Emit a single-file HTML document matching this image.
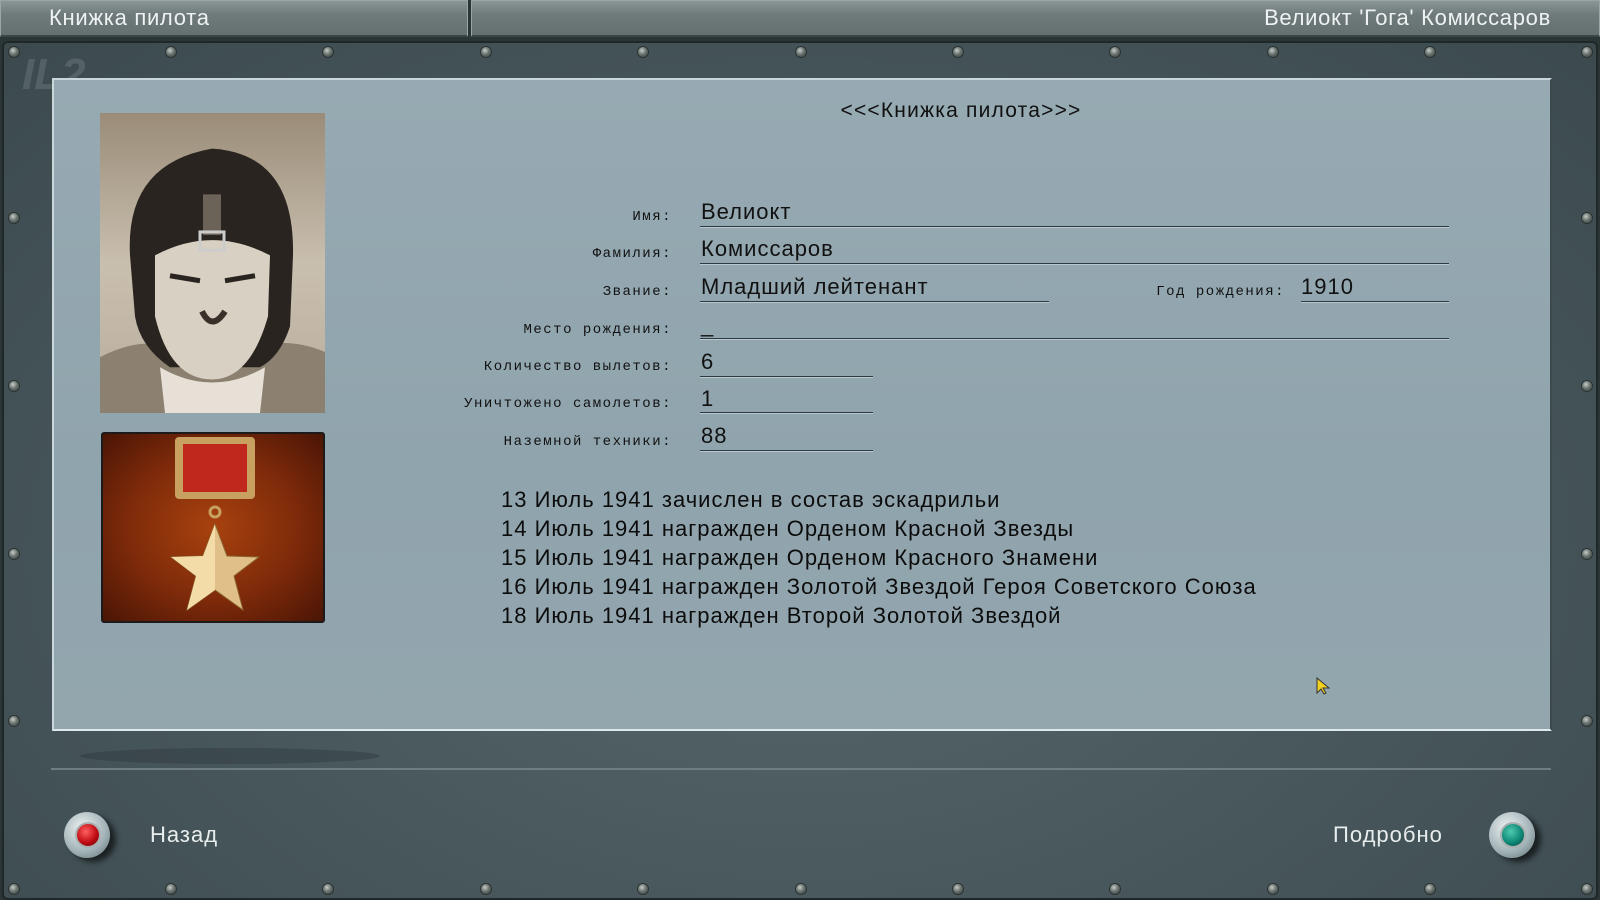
<!DOCTYPE html>
<html><head><meta charset="utf-8"><style>
*{margin:0;padding:0;box-sizing:border-box}
body{width:1600px;height:900px;overflow:hidden;background:#2b3536;font-family:"Liberation Sans",sans-serif;position:relative}
.abs{position:absolute}
.tab{top:0;height:37px;background:linear-gradient(#8a9596,#6f7a7b 40%,#657071);border:1px solid #9aa5a6;border-bottom:2px solid #3a4546;color:#eef2f2;font-size:22px;letter-spacing:0.7px;line-height:34px}
.frame{left:2px;top:41px;width:1596px;height:859px;background:radial-gradient(ellipse at 50% 60%,#56666a,#46555a 60%,#3c4a4e);border:2px solid #1f2829;border-radius:6px}
.content{left:52px;top:78px;width:1500px;height:653px;background:linear-gradient(#97aab3,#90a4ad 60%,#93a6ae);border-top:2px solid #c9d6da;border-left:2px solid #c9d6da;border-right:2px solid #3c4a4e;border-bottom:2px solid #dfe8ea}
.screw{width:10px;height:10px;border-radius:50%;background:radial-gradient(circle at 40% 35%,#c8ccc8,#6a7470 45%,#2f3634);box-shadow:0 0 0 1px #2a3231}
.lab{font-family:"Liberation Mono",monospace;font-size:14px;letter-spacing:1.5px;color:#111;text-align:right;width:500px;left:172px}
.val{font-size:22px;letter-spacing:1px;color:#111;left:701px}
.ln{height:1px;background:#2d3a3f;box-shadow:0 1px 0 #b8c8ce}
.log{left:501px;font-size:22px;letter-spacing:1px;color:#0c0c0c;line-height:29px}
.btxt{color:#e8eeee;font-size:22px;letter-spacing:1px}
</style></head><body>
<div class="abs tab" style="left:0;width:468px;padding-left:48px">Книжка пилота</div>
<div class="abs tab" style="left:471px;width:1129px;text-align:right;padding-right:48px">Велиокт 'Гога' Комиссаров</div>
<div class="abs frame"></div>
<div class="abs" style="left:22px;top:50px;font:italic bold 44px 'Liberation Sans';color:rgba(150,160,165,.25)">IL2</div>
<div class="abs content"></div>

<!-- photo -->
<div class="abs" style="left:100px;top:113px;width:225px;height:300px;background:linear-gradient(#9a8c78,#c9bfaf 50%,#b8ad9c);overflow:hidden">
<svg width="225" height="300" viewBox="0 0 225 295" preserveAspectRatio="none">
<path d="M0 240 Q40 220 70 230 L150 230 Q190 220 225 235 L225 295 L0 295Z" fill="#8c8170"/>
<path d="M30 140 Q25 50 112 35 Q195 40 193 140 L190 210 Q180 240 160 250 L70 250 Q40 230 35 200Z" fill="#2a2420"/>
<path d="M55 140 Q112 110 170 140 L168 200 Q150 262 112 262 Q70 262 55 200Z" fill="#d8d0c2"/>
<path d="M70 160 L100 165 M125 165 L155 160" stroke="#2a2420" stroke-width="5"/>
<path d="M102 195 Q112 215 125 195" stroke="#3a302a" stroke-width="6" fill="none"/>
<rect x="103" y="80" width="18" height="40" fill="#6b6258"/>
<rect x="100" y="117" width="24" height="18" fill="none" stroke="#ccc" stroke-width="3"/>
<path d="M60 250 Q112 280 165 250 L160 295 L65 295Z" fill="#e6e0d6"/>
</svg></div>

<!-- medal -->
<div class="abs" style="left:101px;top:432px;width:224px;height:191px;border:2px solid #1c1a1a;border-radius:3px;background:radial-gradient(ellipse at 50% 50%,#a8420e,#7e2a0a 55%,#4a1505);overflow:hidden">
<svg width="224" height="188" viewBox="0 0 224 188">
<rect x="72" y="3" width="80" height="62" rx="4" fill="#c8a060"/>
<rect x="80" y="10" width="64" height="48" fill="#c0281e"/>
<circle cx="112" cy="78" r="5" fill="none" stroke="#c8a060" stroke-width="3"/>
<polygon points="112,90 124,122 156,123 131,142 140,176 112,156 84,176 93,142 68,123 100,122" fill="#e0c088" stroke="#8a6530"/>
<polygon points="112,90 112,156 84,176 93,142 68,123 100,122" fill="#f3dca8"/>
</svg></div>

<div class="abs" style="left:711px;width:500px;top:99px;text-align:center;font-size:21px;letter-spacing:1.2px;color:#111">&lt;&lt;&lt;Книжка пилота&gt;&gt;&gt;</div>

<div class="abs lab" style="top:209px">Имя:</div>
<div class="abs lab" style="top:246px">Фамилия:</div>
<div class="abs lab" style="top:284px">Звание:</div>
<div class="abs lab" style="top:322px">Место рождения:</div>
<div class="abs lab" style="top:359px">Количество вылетов:</div>
<div class="abs lab" style="top:396px">Уничтожено самолетов:</div>
<div class="abs lab" style="top:434px">Наземной техники:</div>
<div class="abs lab" style="top:284px;left:785px">Год рождения:</div>

<div class="abs val" style="top:199px">Велиокт</div>
<div class="abs val" style="top:236px">Комиссаров</div>
<div class="abs val" style="top:274px">Младший лейтенант</div>
<div class="abs val" style="top:274px;left:1301px">1910</div>
<div class="abs val" style="top:312px">_</div>
<div class="abs val" style="top:349px">6</div>
<div class="abs val" style="top:386px">1</div>
<div class="abs val" style="top:423px">88</div>

<div class="abs ln" style="left:700px;width:749px;top:226px"></div>
<div class="abs ln" style="left:700px;width:749px;top:263px"></div>
<div class="abs ln" style="left:700px;width:349px;top:301px"></div>
<div class="abs ln" style="left:1301px;width:148px;top:301px"></div>
<div class="abs ln" style="left:700px;width:749px;top:338px"></div>
<div class="abs ln" style="left:700px;width:173px;top:376px"></div>
<div class="abs ln" style="left:700px;width:173px;top:412px"></div>
<div class="abs ln" style="left:700px;width:173px;top:450px"></div>

<div class="abs log" style="top:485px">13 Июль 1941 зачислен в состав эскадрильи<br>14 Июль 1941 награжден Орденом Красной Звезды<br>15 Июль 1941 награжден Орденом Красного Знамени<br>16 Июль 1941 награжден Золотой Звездой Героя Советского Союза<br>18 Июль 1941 награжден Второй Золотой Звездой</div>

<svg class="abs" style="left:1316px;top:677px" width="14" height="18"><path d="M1 1 L1 16 L5 12 L8 17 L10 16 L7 11 L13 11Z" fill="#f0d020" stroke="#333" stroke-width="1"/></svg>

<div class="abs" style="left:51px;top:768px;width:1500px;height:2px;background:#6f7d80"></div>
<div class="abs" style="left:80px;top:748px;width:300px;height:16px;border-radius:50%;background:rgba(40,50,52,.35)"></div>

<!-- buttons -->
<div class="abs" style="left:64px;top:812px;width:46px;height:46px;border-radius:50%;background:radial-gradient(circle at 40% 35%,#eef3f4,#9fb0b4 60%,#5a6a6e);box-shadow:6px 4px 6px rgba(0,0,0,.6)"></div>
<div class="abs" style="left:75px;top:822px;width:26px;height:26px;border-radius:50%;background:radial-gradient(circle at 40% 35%,#ff6060,#c00c14 55%,#6a0008);border:2px solid #a9b0b0"></div>
<div class="abs btxt" style="left:150px;top:822px">Назад</div>
<div class="abs btxt" style="left:1333px;top:822px">Подробно</div>
<div class="abs" style="left:1489px;top:812px;width:46px;height:46px;border-radius:50%;background:radial-gradient(circle at 40% 35%,#eef3f4,#9fb0b4 60%,#5a6a6e);box-shadow:6px 4px 6px rgba(0,0,0,.6)"></div>
<div class="abs" style="left:1500px;top:822px;width:26px;height:26px;border-radius:50%;background:radial-gradient(circle at 40% 35%,#50c8b0,#0f8a78 55%,#064038);border:2px solid #a9b0b0"></div>

<!-- screws -->
<div class="abs screw" style="left:9px;top:47px"></div><div class="abs screw" style="left:166px;top:47px"></div><div class="abs screw" style="left:323px;top:47px"></div><div class="abs screw" style="left:481px;top:47px"></div><div class="abs screw" style="left:638px;top:47px"></div><div class="abs screw" style="left:796px;top:47px"></div><div class="abs screw" style="left:953px;top:47px"></div><div class="abs screw" style="left:1110px;top:47px"></div><div class="abs screw" style="left:1268px;top:47px"></div><div class="abs screw" style="left:1425px;top:47px"></div><div class="abs screw" style="left:1582px;top:47px"></div>
<div class="abs screw" style="left:9px;top:884px"></div><div class="abs screw" style="left:166px;top:884px"></div><div class="abs screw" style="left:323px;top:884px"></div><div class="abs screw" style="left:481px;top:884px"></div><div class="abs screw" style="left:638px;top:884px"></div><div class="abs screw" style="left:796px;top:884px"></div><div class="abs screw" style="left:953px;top:884px"></div><div class="abs screw" style="left:1110px;top:884px"></div><div class="abs screw" style="left:1268px;top:884px"></div><div class="abs screw" style="left:1425px;top:884px"></div><div class="abs screw" style="left:1582px;top:884px"></div>
<div class="abs screw" style="left:9px;top:213px"></div><div class="abs screw" style="left:9px;top:381px"></div><div class="abs screw" style="left:9px;top:549px"></div><div class="abs screw" style="left:9px;top:716px"></div>
<div class="abs screw" style="left:1582px;top:213px"></div><div class="abs screw" style="left:1582px;top:381px"></div><div class="abs screw" style="left:1582px;top:549px"></div><div class="abs screw" style="left:1582px;top:716px"></div>
</body></html>
